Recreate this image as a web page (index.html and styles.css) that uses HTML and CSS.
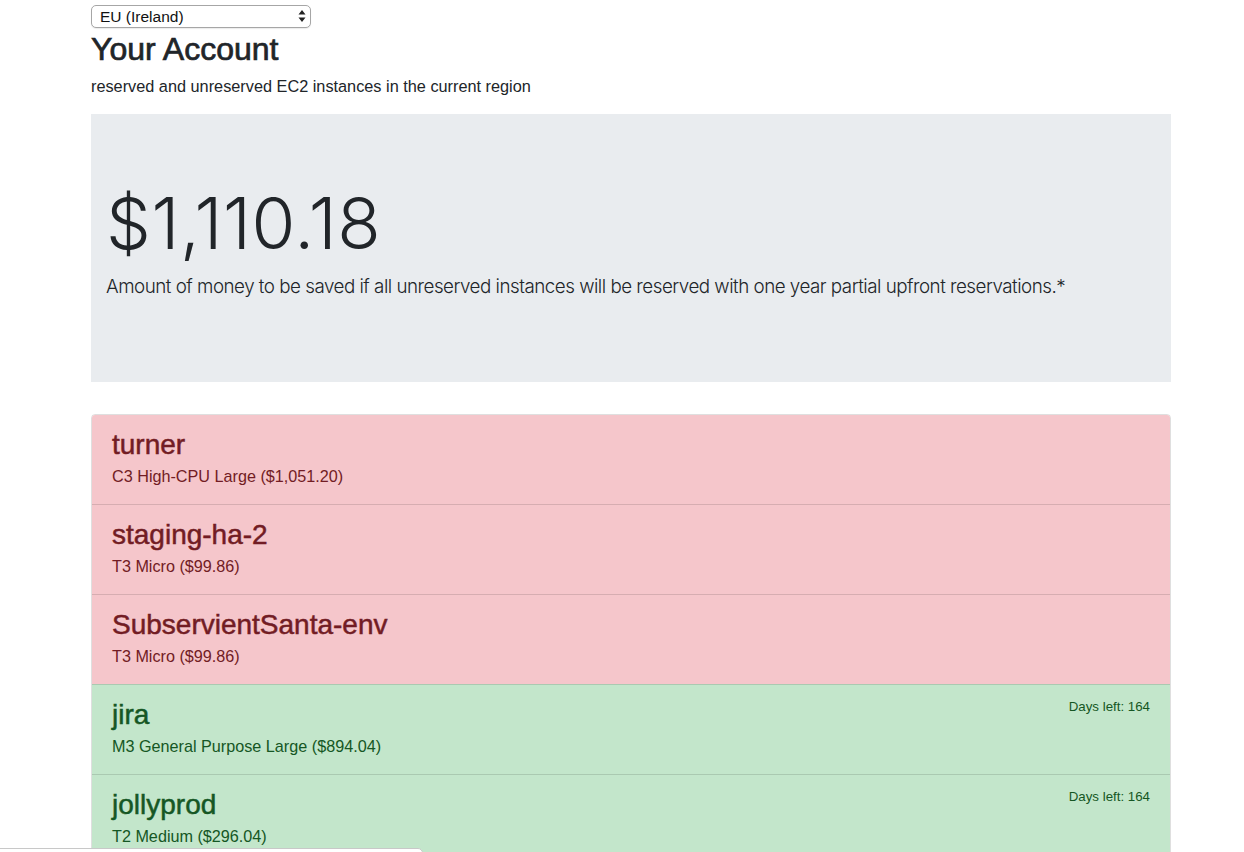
FILE: index.html
```html
<!DOCTYPE html>
<html lang="en">
<head>
<meta charset="utf-8">
<title>Your Account</title>
<link rel="stylesheet" href="styles.css">
</head>
<body>
<div class="container">
  <div class="region-select">
    <select class="select">
      <option>EU (Ireland)</option>
    </select>
    <svg class="select-arrows" width="8" height="14" viewBox="0 0 8 14"><path d="M4 1 L7.5 5.5 H0.5 Z M4 13 L7.5 8.5 H0.5 Z" fill="#222"/></svg>
  </div>
  <h1 class="title">Your Account</h1>
  <p class="subtitle">reserved and unreserved EC2 instances in the current region</p>

  <div class="jumbotron">
    <div class="amount">$1,110.18</div>
    <p class="lead">Amount of money to be saved if all unreserved instances will be reserved with one year partial upfront reservations.*</p>
  </div>

  <ul class="list">
    <li class="item item-danger">
      <h4 class="item-name">turner</h4>
      <p class="item-type">C3 High-CPU Large ($1,051.20)</p>
    </li>
    <li class="item item-danger">
      <h4 class="item-name">staging-ha-2</h4>
      <p class="item-type">T3 Micro ($99.86)</p>
    </li>
    <li class="item item-danger">
      <h4 class="item-name">SubservientSanta-env</h4>
      <p class="item-type">T3 Micro ($99.86)</p>
    </li>
    <li class="item item-success">
      <div class="item-head">
        <h4 class="item-name">jira</h4>
        <small class="days">Days left: 164</small>
      </div>
      <p class="item-type">M3 General Purpose Large ($894.04)</p>
    </li>
    <li class="item item-success">
      <div class="item-head">
        <h4 class="item-name">jollyprod</h4>
        <small class="days">Days left: 164</small>
      </div>
      <p class="item-type">T2 Medium ($296.04)</p>
    </li>
  </ul>
</div>
<div class="status-bubble"></div>
</body>
</html>
```

FILE: styles.css
```css
html, body {
  margin: 0;
  padding: 0;
}
body {
  font-family: "Liberation Sans", Arial, sans-serif;
  color: #212529;
  background: #fff;
  overflow: hidden;
}
.container {
  width: 1080px;
  margin-left: 91px;
}
.region-select {
  position: relative;
  width: 220px;
  height: 23px;
  margin-top: 5px;
}
.select {
  -webkit-appearance: none;
  appearance: none;
  width: 220px;
  height: 23px;
  box-sizing: border-box;
  border: 1px solid #a6a6a6;
  border-radius: 5px;
  background: #fff;
  font-family: "Liberation Sans", Arial, sans-serif;
  font-size: 15.5px;
  color: #111;
  padding: 0 0 0 8px;
  margin: 0;
  box-shadow: 0 1px 1px rgba(0,0,0,0.08);
}
.select-arrows {
  position: absolute;
  right: 5px;
  top: 4px;
}
.title {
  font-family: "Liberation Sans", Arial, sans-serif;
  font-weight: 400;
  -webkit-text-stroke: 0.7px #212529;
  font-size: 32px;
  line-height: 38px;
  margin: 2px 0 0;
  color: #212529;
}
.subtitle {
  font-size: 16.3px;
  line-height: 20px;
  margin: 8px 0 0;
}
.jumbotron {
  background: #e9ecef;
  margin-top: 18px;
  height: 268px;
  box-sizing: border-box;
  padding: 66px 15px 0 15px;
}
.amount {
  font-family: Inter, "Noto Sans", sans-serif;
  font-weight: 300;
  font-size: 71px;
  line-height: 86px;
  letter-spacing: 0.6px;
}
.lead {
  font-family: Inter, "Noto Sans", sans-serif;
  font-weight: 300;
  font-size: 18.8px;
  line-height: 26px;
  margin: 8px 0 0;
  letter-spacing: -0.5px;
}
.list {
  list-style: none;
  margin: 32px 0 0;
  padding: 0;
  border-radius: 4px;
  overflow: hidden;
  border: 1px solid rgba(0,0,0,0.125);
}
.item {
  height: 90px;
  box-sizing: border-box;
  padding: 14px 20px 0 20px;
  border-top: 1px solid rgba(0,0,0,0.125);
}
.item:first-child {
  border-top: none;
  height: 89px;
}
.item-danger {
  background: #f5c6cb;
  color: #721c24;
}
.item-success {
  background: #c3e6cb;
  color: #155724;
}
.item-head {
  display: flex;
  justify-content: space-between;
  align-items: flex-start;
}
.item-name {
  font-size: 28px;
  line-height: 32px;
  font-weight: 400;
  -webkit-text-stroke: 0.5px currentColor;
  margin: 0;
}
.item-type {
  font-size: 16.2px;
  line-height: 20px;
  margin: 5px 0 0;
}
.days {
  font-size: 13.3px;
  line-height: 16px;
  margin-top: 0;
}
.status-bubble {
  position: fixed;
  left: -2px;
  top: 848px;
  width: 423px;
  height: 12px;
  background: #fff;
  border: 1px solid #c8c8c8;
  border-radius: 0 5px 0 0;
}
```
